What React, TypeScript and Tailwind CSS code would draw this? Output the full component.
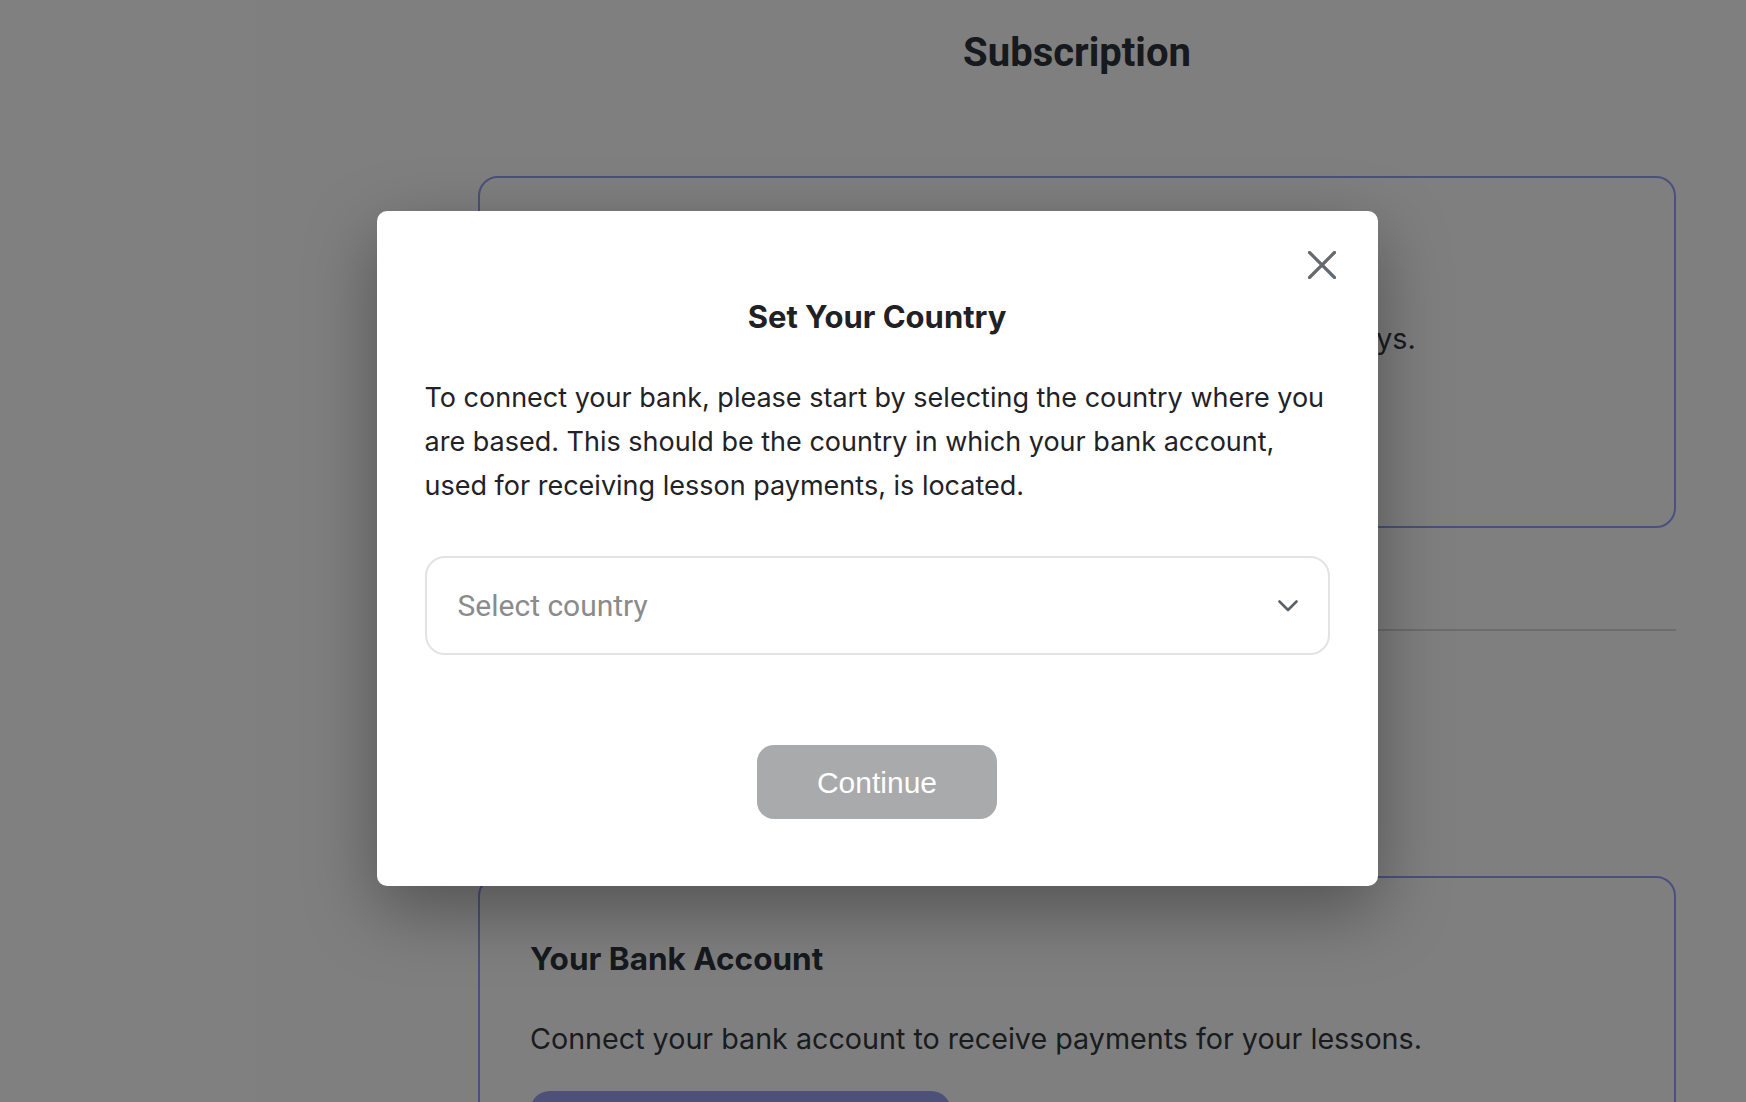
import type { ReactNode } from "react";

const BODY_FONT = "font-['Inter','Roboto',sans-serif]";

interface SettingsCardProps {
  title: string;
  text: string;
  action: string;
}

function SettingsCard({ title, text, action }: SettingsCardProps): ReactNode {
  return (
    <section className="rounded-[20px] border-2 border-[#96a0f8] px-[50px] pb-[55px] pt-[61px]">
      <h2 className={`${BODY_FONT} text-[31.5px] font-bold leading-[40px] text-[#2c323a]`}>
        {title}
      </h2>
      <p className={`${BODY_FONT} mt-[40px] whitespace-nowrap text-[28.7px] leading-[40px] text-[#33383f]`}>
        {text}
      </p>
      <button
        type="button"
        className={`${BODY_FONT} mt-[32px] h-[80px] w-[421px] rounded-[20px] bg-[#9aa0f0] text-[28px] font-semibold text-white`}
      >
        {action}
      </button>
    </section>
  );
}

function ChevronDown(): ReactNode {
  return (
    <svg width="20" height="12" viewBox="0 0 20 12" fill="none" aria-hidden>
      <polyline
        points="1.5,1.5 10,10 18.5,1.5"
        stroke="#5c6166"
        strokeWidth="2.6"
        strokeLinecap="round"
        strokeLinejoin="round"
      />
    </svg>
  );
}

function CloseIcon(): ReactNode {
  return (
    <svg width="28" height="28" viewBox="0 0 28 28" fill="none" aria-hidden>
      <path
        d="M1.5 1.5 L26.5 26.5 M26.5 1.5 L1.5 26.5"
        stroke="#646a70"
        strokeWidth="3.2"
        strokeLinecap="round"
      />
    </svg>
  );
}

function CountryModal(): ReactNode {
  return (
    <div className="relative w-[1001px] rounded-[10px] bg-white px-[48px] pb-[67px] pt-[88px] shadow-[0_24px_70px_rgba(0,0,0,0.35)]">
      <button
        type="button"
        className="absolute right-[42px] top-[40px] flex h-[28px] w-[28px] items-center justify-center"
        title="Close"
      >
        <CloseIcon />
      </button>
      <h2 className={`${BODY_FONT} text-center text-[31px] font-bold leading-[36px] text-[#1f2124]`}>
        Set Your Country
      </h2>
      <p className={`${BODY_FONT} mt-[41px] text-[27px] leading-[44px] text-[#1f2226]`}>
        To connect your bank, please start by selecting the country where you
        are based. This should be the country in which your bank account, used
        for receiving lesson payments, is located.
      </p>
      <button
        type="button"
        className="mt-[48px] flex h-[99px] w-full items-center justify-between rounded-[20px] border-2 border-[#e3e3e3] pl-[31px] pr-[30px]"
      >
        <span className="font-['Roboto',sans-serif] text-[30px] text-[#8b8b8b]">
          Select country
        </span>
        <ChevronDown />
      </button>
      <div className="mt-[90px] flex justify-center">
        <button
          type="button"
          disabled
          className="h-[74px] w-[240px] rounded-[17px] bg-[#a9aaac] font-['Liberation_Sans',Arial,sans-serif] text-[30px] text-white"
        >
          Continue
        </button>
      </div>
    </div>
  );
}

export default function App(): ReactNode {
  return (
    <div className="relative h-[1102px] w-[1746px] overflow-hidden bg-white">
      <div className="flex">
        <aside className="w-[478px] shrink-0" />
        <main className="w-[1198px] shrink-0 pt-[29px]">
          <h1 className="text-center font-['Roboto',sans-serif] text-[40px] font-bold leading-[48px] text-[#2c323a]">
            Subscription
          </h1>
          <div className="mt-[99px] flex flex-col">
            <SettingsCard
              title="Your Plan"
              text="Your free trial is active. Upgrade to a monthly plan within 14 days."
              action="Manage Subscription"
            />
            <div className="mt-[101px] h-[2px] bg-[#d8d8d8]" />
            <div className="h-[245px]" />
            <SettingsCard
              title="Your Bank Account"
              text="Connect your bank account to receive payments for your lessons."
              action="Connect Bank Account"
            />
          </div>
        </main>
      </div>
      <div className="absolute inset-0 flex items-center justify-center bg-black/50 pb-[5px] pl-[8px]">
        <CountryModal />
      </div>
    </div>
  );
}
